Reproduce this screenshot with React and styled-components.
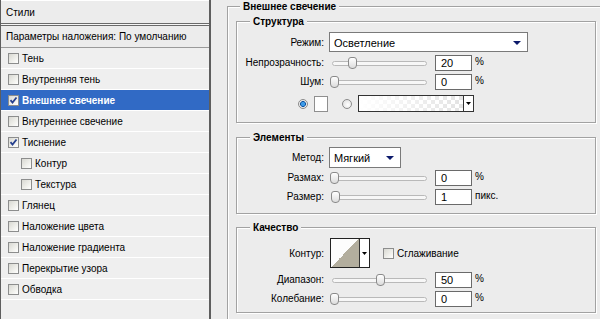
import React from 'react';
import styled, { createGlobalStyle } from 'styled-components';

const Global = createGlobalStyle`
  html, body { margin: 0; padding: 0; background: #ececec; overflow: hidden; }
  body {
    font-family: "Liberation Sans", Arial, sans-serif;
    font-size: 10px;
    color: #000;
  }
`;

const Window = styled.div`
  display: flex;
  width: 600px;
  height: 319px;
  background: #ececec;
  overflow: hidden;
`;

// ---------- left list ----------

const Sidebar = styled.div`
  flex: none;
  width: 211px;
  height: 100%;
  box-sizing: border-box;
  border-left: 1px solid #5e5e5e;
  border-right: 2px solid #5e5e5e;
  background: #efefef;
  display: flex;
  flex-direction: column;
`;

const Header = styled.div`
  height: 23px;
  line-height: 23px;
  padding-left: 5px;
  background: #ececec;
  border-top: 1px solid #fff;
  box-sizing: border-box;
`;

const DoubleRule = styled.div`
  height: 3px;
  box-sizing: border-box;
  border-top: 1px solid #6a6a6a;
  border-bottom: 1px solid #6a6a6a;
  background: #f6f6f6;
`;

const Params = styled.div`
  height: 22px;
  line-height: 21px;
  padding-left: 5px;
  box-sizing: border-box;
  border-bottom: 1px solid #9a9a9a;
  background: #ececec;
`;

const Item = styled.div`
  height: 21px;
  box-sizing: border-box;
  display: flex;
  align-items: center;
  padding-left: ${p => (p.$indent ? 20 : 7)}px;
  border-bottom: 1px solid #fff;
  background: ${p => (p.$active ? '#316ac5' : '#efefef')};
  color: ${p => (p.$active ? '#fff' : '#000')};
  font-weight: ${p => (p.$active ? 'bold' : 'normal')};
`;

const Box = styled.span`
  flex: none;
  position: relative;
  width: 11px;
  height: 11px;
  box-sizing: border-box;
  border: 1px solid #8c8d8d;
  background: linear-gradient(135deg, #d8d8d2 0%, #f0f0ec 60%, #fff 100%);
  margin-right: 3px;
  display: inline-flex;
  align-items: center;
  justify-content: center;
`;

const Check = ({ checked }) => (
  <Box>
    {checked && (
      <svg width="9" height="9" viewBox="0 0 9 9">
        <path d="M1.5 4.2 L3.5 6.5 L7.5 1.5" fill="none" stroke="#253f8e" strokeWidth="1.8" />
      </svg>
    )}
  </Box>
);

const items = [
  { label: 'Тень' },
  { label: 'Внутренняя тень' },
  { label: 'Внешнее свечение', checked: true, active: true },
  { label: 'Внутреннее свечение' },
  { label: 'Тиснение', checked: true },
  { label: 'Контур', indent: true },
  { label: 'Текстура', indent: true },
  { label: 'Глянец' },
  { label: 'Наложение цвета' },
  { label: 'Наложение градиента' },
  { label: 'Перекрытие узора' },
  { label: 'Обводка' },
];

// ---------- right side ----------

const Content = styled.div`
  flex: 1;
  padding: 6px 0 0 16px;
`;

const Outer = styled.div`
  position: relative;
  border-top: 1px solid #a2a2a2;
  border-left: 1px solid #a2a2a2;
  box-shadow: inset 1px 1px 0 #fff;
  padding: 14px 4px 40px 8px;
`;

const Section = styled.div`
  position: relative;
  border: 1px solid #a2a2a2;
  box-shadow: inset 1px 1px 0 #fff, 1px 1px 0 #fff;
  margin-top: ${p => p.$mt || 0}px;
  padding: ${p => p.$pt}px 0 ${p => p.$pb}px 0;
  display: flex;
  flex-direction: column;
  gap: ${p => p.$gap || 2}px;
`;

const Title = styled.div`
  position: absolute;
  top: -7px;
  left: ${p => p.$left || 13}px;
  padding: 0 3px;
  line-height: 13px;
  font-weight: bold;
  background: #ececec;
`;

const Row = styled.div`
  display: flex;
  align-items: center;
  height: ${p => p.$h || 17}px;
  margin-top: ${p => p.$mt || 0}px;
  padding-left: ${p => p.$pl || 0}px;
`;

const Label = styled.span`
  flex: none;
  width: 87px;
  text-align: right;
  margin-right: 5px;
  white-space: nowrap;
`;

const Select = styled.div`
  width: ${p => p.$w}px;
  height: ${p => p.$h}px;
  box-sizing: border-box;
  border: 1px solid #7a7a7a;
  background: #fff;
  display: flex;
  align-items: center;
  justify-content: space-between;
  padding: 1px 6px 0 4px;
  font-size: 11px;
`;

const Arrow = ({ color = '#0c1a6b', w = 8, h = 4 }) => (
  <svg width={w} height={h} viewBox={`0 0 ${w} ${h}`}>
    <polygon points={`0,0 ${w},0 ${w / 2},${h}`} fill={color} />
  </svg>
);

const SliderWrap = styled.div`
  position: relative;
  flex: none;
  width: 100px;
  height: 17px;
`;

const Track = styled.div`
  position: absolute;
  left: 3px;
  right: 2px;
  top: 7px;
  height: 3px;
  border: 1px solid #b9b9b9;
  border-radius: 3px;
  background: #f7f7f7;
`;

const Thumb = styled.div`
  position: absolute;
  top: 3px;
  width: 7px;
  height: 10px;
  border: 1px solid #8a8a8a;
  border-radius: 3px 3px 4px 4px;
  background: linear-gradient(#fff, #dcdcdc);
`;

const Slider = ({ value }) => (
  <SliderWrap>
    <Track />
    <Thumb style={{ left: 1 + value * 0.92 }} />
  </SliderWrap>
);

const Num = styled.div`
  flex: none;
  margin-left: 6px;
  width: 37px;
  height: 16px;
  box-sizing: border-box;
  border: 1px solid #6a6a6a;
  background: #fff;
  padding-left: 5px;
  line-height: 14px;
  font-size: 11px;
`;

const Unit = styled.span`
  margin-left: 3px;
  margin-top: -3px;
`;

const Radio = styled.span`
  flex: none;
  width: 10px;
  height: 10px;
  border-radius: 50%;
  box-sizing: border-box;
  border: 1px solid #8a8a8a;
  margin-left: ${p => p.$ml || 0}px;
  background: ${p =>
    p.$on
      ? 'radial-gradient(circle, #3c9be8 0 1.6px, #0d4f9c 2.6px, #e8e8e8 3.2px, #fdfdfd)'
      : 'radial-gradient(circle at 60% 60%, #fff, #dadada)'};
`;

const Swatch = styled.span`
  flex: none;
  width: 14px;
  height: 16px;
  box-sizing: border-box;
  border: 1px solid #8f8f8f;
  background: #fff;
  margin-left: 6px;
`;

const GradBox = styled.div`
  flex: none;
  display: flex;
  margin-left: 6px;
  width: 116px;
  height: 17px;
  box-sizing: border-box;
  border: 1px solid #333;
`;

const GradFill = styled.div`
  flex: 1;
  background:
    linear-gradient(to right, #fff 0%, rgba(255, 255, 255, 0.2) 100%),
    repeating-conic-gradient(#dcdcdc 0 25%, #fff 0 50%) 0 0 / 8px 8px;
`;

const SmallBtn = styled.div`
  flex: none;
  width: 9px;
  border-left: 1px solid #333;
  background: #fff;
  display: flex;
  align-items: center;
  justify-content: center;
`;

const ContourBox = styled.div`
  flex: none;
  display: flex;
  width: 40px;
  height: 30px;
  box-sizing: border-box;
  border: 1px solid #222;
  margin-left: 1px;
`;

const ContourFill = styled.div`
  flex: 1;
  background: linear-gradient(to bottom right, #fdfdfd 50%, #b3ae9e 50%);
`;

const CheckText = styled.span`
  display: inline-flex;
  align-items: center;
  margin-left: 13px;
`;

const SliderRow = ({ label, value, unit }) => (
  <Row>
    <Label>{label}</Label>
    <Slider value={value} />
    <Num>{value}</Num>
    <Unit>{unit}</Unit>
  </Row>
);

export default function App() {
  return (
    <Window>
      <Global />
      <Sidebar>
        <Header>Стили</Header>
        <DoubleRule />
        <Params>Параметры наложения: По умолчанию</Params>
        {items.map(it => (
          <Item key={it.label} $indent={it.indent} $active={it.active}>
            <Check checked={it.checked} />
            {it.label}
          </Item>
        ))}
      </Sidebar>

      <Content>
        <Outer>
          <Title $left={12}>Внешнее свечение</Title>

          <Section $pt={10} $pb={10}>
            <Title>Структура</Title>
            <Row $h={20}>
              <Label>Режим:</Label>
              <Select $w={199} $h={20}>
                Осветление
                <Arrow />
              </Select>
            </Row>
            <SliderRow label="Непрозрачность:" value={20} unit="%" />
            <SliderRow label="Шум:" value={0} unit="%" />
            <Row $mt={3} $pl={61}>
              <Radio $on />
              <Swatch />
              <Radio $ml={14} />
              <GradBox>
                <GradFill />
                <SmallBtn>
                  <Arrow color="#000" w={5} h={3} />
                </SmallBtn>
              </GradBox>
            </Row>
          </Section>

          <Section $mt={14} $pt={9} $pb={8}>
            <Title>Элементы</Title>
            <Row $h={20}>
              <Label>Метод:</Label>
              <Select $w={72} $h={21}>
                Мягкий
                <Arrow />
              </Select>
            </Row>
            <SliderRow label="Размах:" value={0} unit="%" />
            <SliderRow label="Размер:" value={1} unit="пикс." />
          </Section>

          <Section $mt={13} $pt={10} $pb={5}>
            <Title>Качество</Title>
            <Row $h={30}>
              <Label>Контур:</Label>
              <ContourBox>
                <ContourFill />
                <SmallBtn>
                  <Arrow color="#000" w={5} h={3} />
                </SmallBtn>
              </ContourBox>
              <CheckText>
                <Check />
                Сглаживание
              </CheckText>
            </Row>
            <Row $mt={1}>
              <Label>Диапазон:</Label>
              <Slider value={50} />
              <Num>50</Num>
              <Unit>%</Unit>
            </Row>
            <SliderRow label="Колебание:" value={0} unit="%" />
          </Section>
        </Outer>
      </Content>
    </Window>
  );
}
